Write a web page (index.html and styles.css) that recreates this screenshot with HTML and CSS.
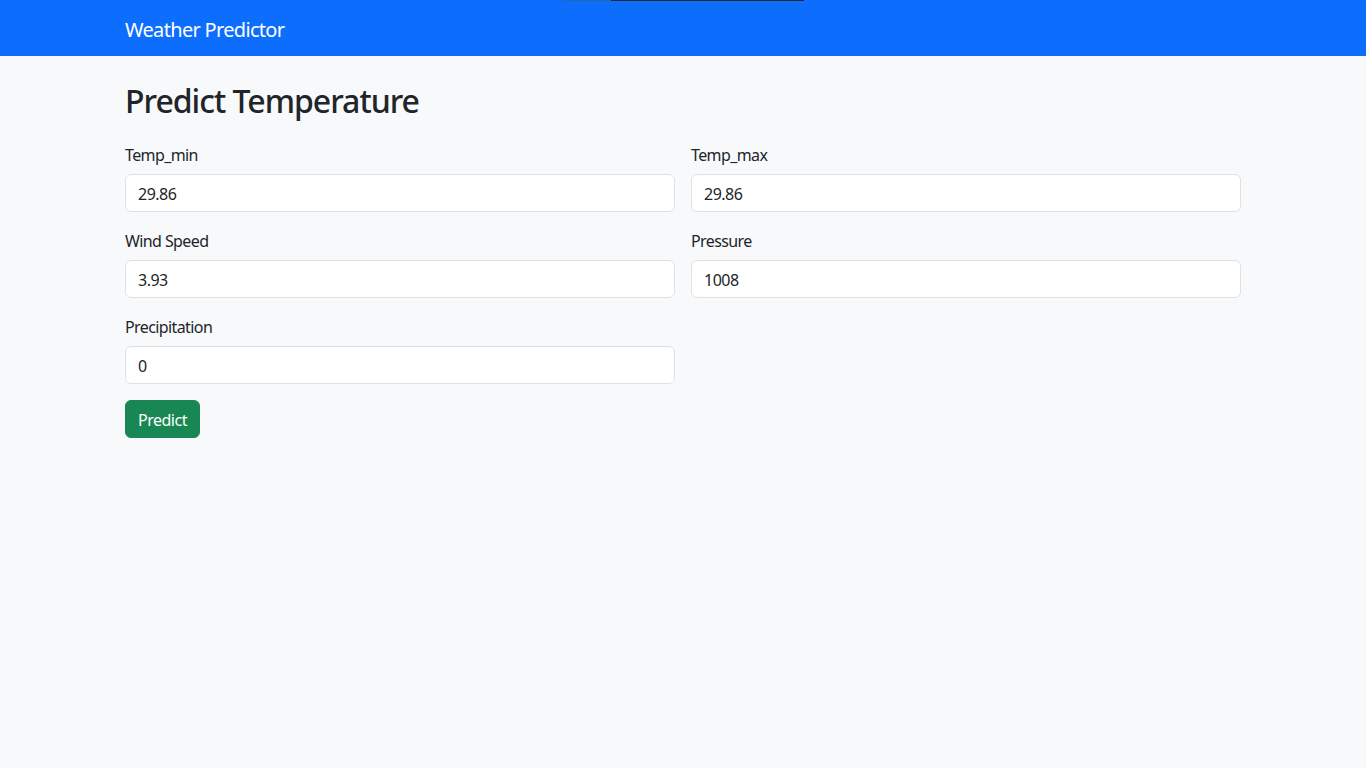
FILE: index.html
```html
<!DOCTYPE html>
<html lang="en">
<head>
<meta charset="utf-8">
<title>Weather Predictor</title>
<link rel="stylesheet" href="styles.css">
</head>
<body>
<div class="topline"><span class="seg-a"></span><span class="seg-b"></span></div>
<nav class="navbar">
  <div class="container">
    <span class="brand">Weather Predictor</span>
  </div>
</nav>
<main class="container page">
  <h2 class="title">Predict Temperature</h2>
  <form class="form">
    <div class="grid">
      <div class="field">
        <label class="label">Temp_min</label>
        <input class="control" type="text" value="29.86">
      </div>
      <div class="field">
        <label class="label">Temp_max</label>
        <input class="control" type="text" value="29.86">
      </div>
      <div class="field">
        <label class="label">Wind Speed</label>
        <input class="control" type="text" value="3.93">
      </div>
      <div class="field">
        <label class="label">Pressure</label>
        <input class="control" type="text" value="1008">
      </div>
      <div class="field">
        <label class="label">Precipitation</label>
        <input class="control" type="text" value="0">
      </div>
    </div>
    <button class="btn" type="button">Predict</button>
  </form>
</main>
</body>
</html>
```

FILE: styles.css
```css
* { box-sizing: border-box; }
html, body { margin: 0; padding: 0; }
body {
  background: #f8f9fa;
  color: #212529;
  font-family: "Noto Sans", "Open Sans", sans-serif;
  font-size: 16px;
  line-height: 1.5;
  letter-spacing: -0.5px;
  min-height: 768px;
}
.topline {
  position: absolute;
  top: 0;
  left: 563px;
  height: 1px;
  display: flex;
}
.seg-a { width: 48px; height: 1px; background: #1b6ea8; }
.seg-b { width: 193px; height: 1px; background: #22262b; }
.container {
  width: 1140px;
  margin: 0 auto;
  padding: 0 12px;
}
.navbar {
  background: #0d6efd;
  height: 56px;
  display: flex;
  align-items: center;
}
.brand {
  color: #fff;
  font-size: 20px;
  line-height: 30px;
  letter-spacing: -0.68px;
  display: block;
  padding-top: 4px;
}
.page { padding-top: 24px; }
.title {
  margin: 0 0 22px;
  padding-top: 2px;
  font-size: 32px;
  font-weight: 500;
  line-height: 38px;
  letter-spacing: -1px;
  height: 40px;
}
.grid {
  display: grid;
  grid-template-columns: 1fr 1fr;
  column-gap: 16px;
  row-gap: 16px;
}
.field { display: flex; flex-direction: column; }
.label { margin-bottom: 7px; padding-top: 1px; line-height: 24px; letter-spacing: -0.6px; }
.control {
  height: 38px;
  padding: 7px 12px 5px;
  font: inherit;
  letter-spacing: -0.5px;
  color: #212529;
  background: #fff;
  border: 1px solid #dee2e6;
  border-radius: 6px;
  outline: none;
}
.btn {
  margin-top: 16px;
  height: 38px;
  padding: 7px 12px 5px;
  font: inherit;
  letter-spacing: -0.5px;
  color: #fff;
  background: #198754;
  border: 1px solid #198754;
  border-radius: 6px;
}
```
